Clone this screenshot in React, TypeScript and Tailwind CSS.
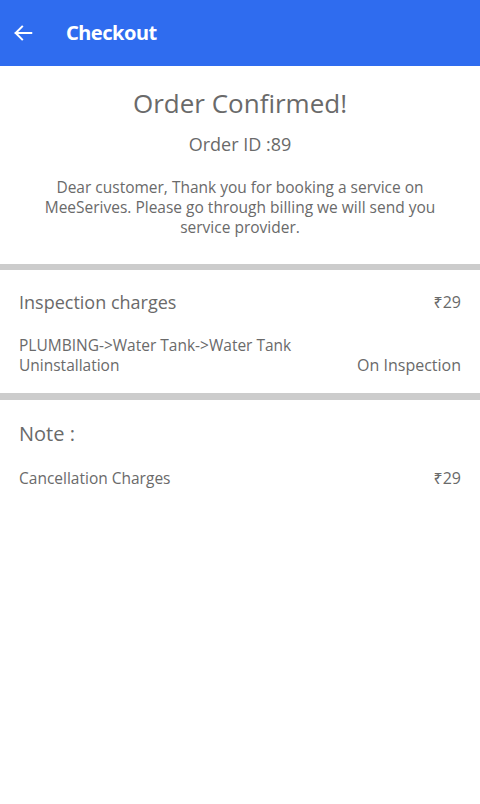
import React from 'react';

const App: React.FC = () => {
  return (
    <div className="w-[480px] h-[804px] bg-white text-[#6a6a6a]" style={{ fontFamily: '"Open Sans", "Noto Sans", sans-serif' }}>
      <header className="h-[66px] bg-[#2f6cef] flex items-center px-[12px] text-white">
        <svg width="22" height="22" viewBox="0 0 24 24" fill="none" stroke="currentColor" strokeWidth="2.2" strokeLinecap="square">
          <path d="M21 12H4M11 5l-7 7 7 7" />
        </svg>
        <h1 className="ml-[32px] text-[20px] font-bold tracking-tight" style={{ fontFamily: '"Noto Sans", sans-serif' }}>Checkout</h1>
      </header>

      <section className="flex flex-col items-center text-center px-[40px] pt-[19px] pb-[27px]">
        <h2 className="text-[26px] leading-[36px]">Order Confirmed!</h2>
        <p className="mt-[11px] text-[18px] leading-[24px]">Order ID :89</p>
        <p className="mt-[21px] text-[15.5px] leading-[20px]">
          Dear customer, Thank you for booking a service on MeeSerives. Please go through billing we will send you service provider.
        </p>
      </section>

      <div className="h-[6px] bg-[#cccccc]" />

      <section className="px-[19px] pt-[19px] pb-[18px]">
        <div className="flex justify-between items-center">
          <span className="text-[18px] leading-[26px]">Inspection charges</span>
          <span className="text-[16px]">₹29</span>
        </div>
        <div className="flex justify-between items-end mt-[20px]">
          <span className="text-[15.5px] leading-[20px] w-[300px]">PLUMBING-&gt;Water Tank-&gt;Water Tank Uninstallation</span>
          <span className="text-[16px] leading-[20px]">On Inspection</span>
        </div>
      </section>

      <div className="h-[7px] bg-[#cccccc]" />

      <section className="px-[19px] pt-[20px]">
        <p className="text-[20px] leading-[28px]">Note :</p>
        <div className="flex justify-between items-center mt-[18px]">
          <span className="text-[15.5px] leading-[20px]">Cancellation Charges</span>
          <span className="text-[16px]">₹29</span>
        </div>
      </section>
    </div>
  );
};

export default App;
